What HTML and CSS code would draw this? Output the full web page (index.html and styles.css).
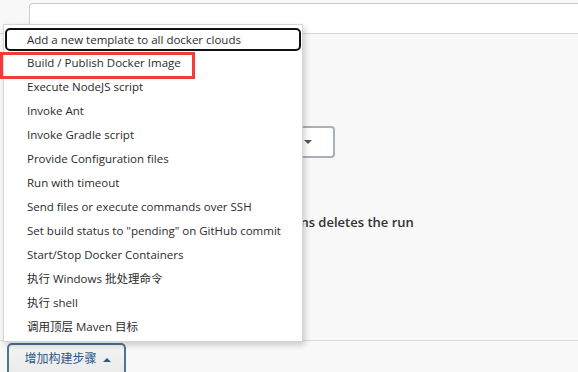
FILE: index.html
```html
<!DOCTYPE html>
<html lang="zh-CN">
  <head>
    <meta charset="UTF-8" />
    <title>Build steps</title>
    <link rel="stylesheet" href="styles.css">
  </head>
  <body>
    <div class="page">
      <!-- 上方输入框 -->
      <div class="top-row">
        <div class="text-input"></div>
      </div>

      <!-- 被菜单遮住的配置区 -->
      <div class="section">
        <div class="select-row">
          <div class="select-box"><span class="caret-down"></span></div>
        </div>
        <div class="label-row">Deleting the build also cleans up actions deletes the run</div>
      </div>

      <div class="footer">
        <button class="add-btn">增加构建步骤 <span class="caret-up"></span></button>
      </div>
    </div>

    <!-- 下拉菜单 -->
    <ul class="menu">
      <li class="focused">Add a new template to all docker clouds</li>
      <li>Build / Publish Docker Image</li>
      <li>Execute NodeJS script</li>
      <li>Invoke Ant</li>
      <li>Invoke Gradle script</li>
      <li>Provide Configuration files</li>
      <li>Run with timeout</li>
      <li>Send files or execute commands over SSH</li>
      <li>Set build status to "pending" on GitHub commit</li>
      <li>Start/Stop Docker Containers</li>
      <li>执行 Windows 批处理命令</li>
      <li>执行 shell</li>
      <li>调用顶层 Maven 目标</li>
    </ul>

    <!-- 红框标注 -->
    <div class="highlight"></div>
  </body>
</html>
```

FILE: styles.css
```css
body {
  margin: 0;
  background: #f8f8f8;
  font-family: "Open Sans", "Noto Sans CJK SC", sans-serif;
  font-size: 12px;
  color: #333;
}
.page {
  width: 578px;
  height: 372px;
  overflow: hidden;
}
.top-row {
  padding: 3px 0 0 29px;
  border-bottom: 1px solid #d4d4d4;
}
.text-input {
  height: 29px;
  background: #fff;
  border: 1px solid #ccc;
  border-right: none;
  border-bottom: none;
  border-radius: 4px 0 0 0;
}
.section {
  height: 306px;
  border-bottom: 1px solid #dcdcdc;
}
.select-row {
  padding: 92px 0 0 0;
}
.select-box {
  width: 326px;
  height: 28px;
  margin-left: 5px;
  background: #fff;
  border: 2px solid #a9b0b8;
  border-radius: 4px;
  position: relative;
}
.caret-down {
  position: absolute;
  right: 21px;
  top: 12px;
  border-left: 4px solid transparent;
  border-right: 4px solid transparent;
  border-top: 4px solid #555;
}
.label-row {
  margin-top: 55px;
  padding-left: 63px;
  font-size: 13px;
  font-weight: 600;
  color: #333;
  white-space: nowrap;
}
.footer {
  padding: 2px 0 0 7px;
}
.add-btn {
  font-family: "Open Sans", "Noto Sans CJK SC", sans-serif;
  font-size: 12px;
  color: #2d5986;
  background: linear-gradient(#f4f4f4, #eaeaea);
  border: 2px solid #4f7497;
  border-radius: 5px;
  width: 119px;
  height: 34px;
  padding: 0 0 4px 2px;
  text-align: center;
}
.caret-up {
  display: inline-block;
  vertical-align: middle;
  margin-left: 3px;
  border-left: 4px solid transparent;
  border-right: 4px solid transparent;
  border-bottom: 4px solid #2d5986;
}
.menu {
  position: absolute;
  left: 3px;
  top: 24px;
  width: 300px;
  margin: 0;
  padding: 2px 0 4px 0;
  list-style: none;
  background: #fff;
  border: 1px solid #d6d6d6;
  box-sizing: border-box;
  height: 318px;
  box-shadow: 2px 3px 6px rgba(0, 0, 0, 0.18);
}
.menu li {
  height: 24px;
  line-height: 24px;
  padding-left: 22px;
  margin: 0 1px;
  font-size: 11.5px;
  color: #2b2b2b;
  white-space: nowrap;
}
.menu li.focused {
  outline: 2px solid #111;
  outline-offset: -2px;
  border-radius: 5px;
  margin-top: 1px;
  height: 23px;
}
.highlight {
  position: absolute;
  left: 0;
  top: 52px;
  width: 189px;
  height: 21px;
  border: 3px solid #f23b3b;
}
```
